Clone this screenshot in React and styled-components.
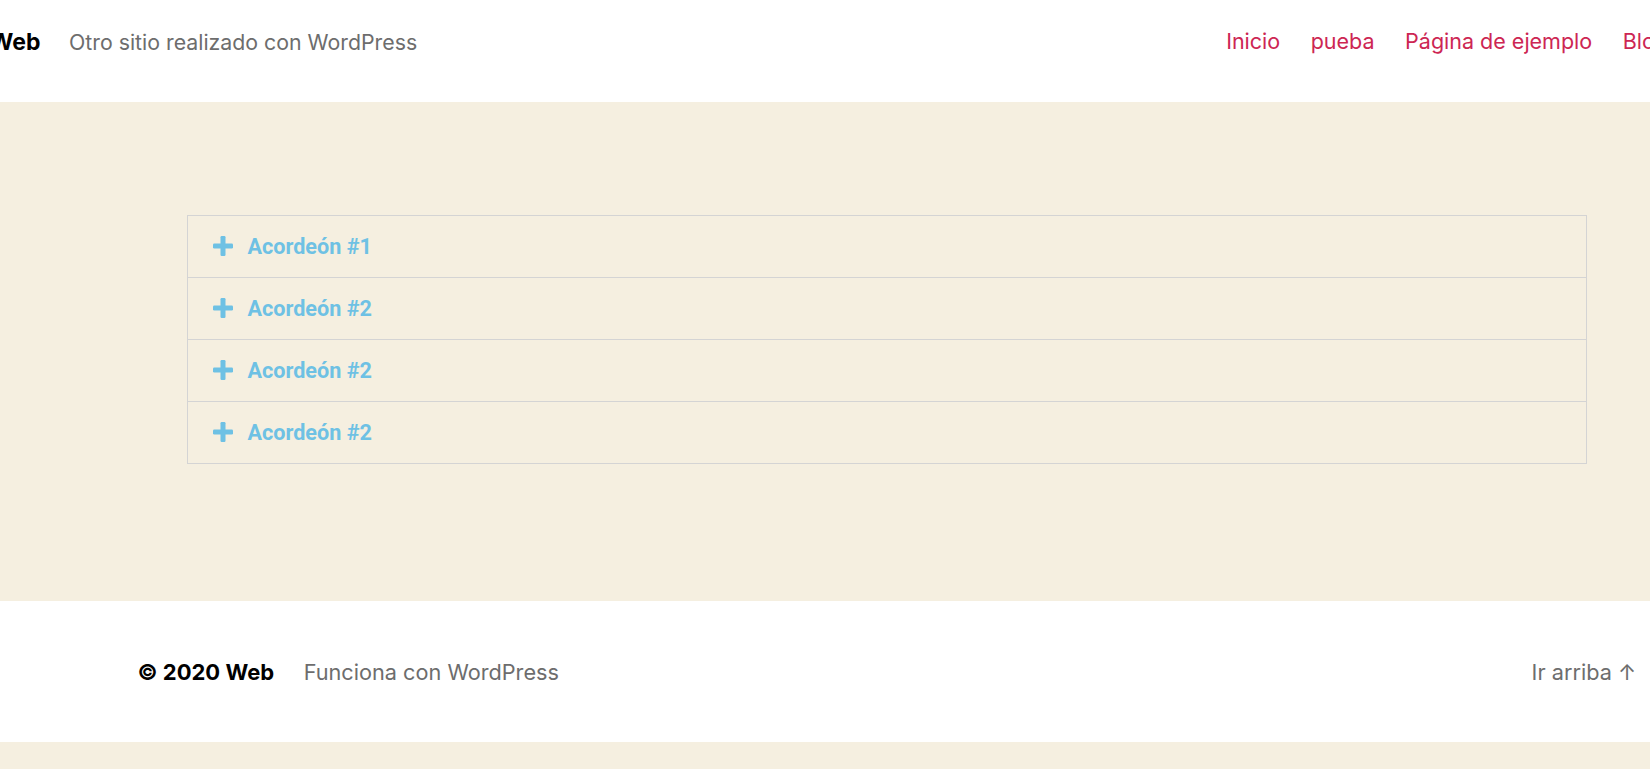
import React from "react";
import styled, { createGlobalStyle } from "styled-components";

const GlobalStyle = createGlobalStyle`
  html, body {
    margin: 0;
    padding: 0;
    background: #f5efe0;
    overflow: hidden;
  }
  body {
    font-family: Inter, "Noto Sans", sans-serif;
    -webkit-font-smoothing: antialiased;
  }
  * { box-sizing: border-box; }
`;

const Page = styled.div`
  width: 1650px;
  min-height: 769px;
  display: flex;
  flex-direction: column;
  background: #f5efe0;
  overflow: hidden;
`;

const Header = styled.header`
  height: 102px;
  background: #ffffff;
  overflow: hidden;
  padding-top: 29px;
`;

const HeaderInner = styled.div`
  display: flex;
  align-items: baseline;
  width: 1760px;
  margin-left: -10.4px;
`;

const SiteTitle = styled.a`
  font-size: 23px;
  line-height: 1.2;
  font-weight: 700;
  color: #000000;
  text-decoration: none;
  white-space: nowrap;
`;

const SiteDescription = styled.div`
  margin-left: 28.5px;
  font-size: 21.3px;
  line-height: 1.2;
  color: #6d6d6d;
  white-space: nowrap;
`;

const Nav = styled.nav`
  margin-left: 809px;
  display: flex;
  align-items: baseline;
  gap: 30.5px;
`;

const NavLink = styled.a`
  font-size: 21.5px;
  line-height: 1.2;
  color: #cd2653;
  text-decoration: none;
  white-space: nowrap;
  position: relative;
  top: -1.5px;
`;

const Main = styled.main`
  background: #f5efe0;
  height: 499px;
  padding-top: 113px;
  padding-left: 187px;
`;

const Accordion = styled.div`
  width: 1400px;
`;

const Item = styled.div`
  border: 1px solid #d4d4d4;
  & + & {
    border-top: none;
  }
`;

const Title = styled.div`
  display: flex;
  align-items: center;
  height: 61px;
  padding-left: 25px;
  gap: 14.5px;
  font-family: Roboto, "Noto Sans", sans-serif;
  font-weight: 700;
  font-size: 21.6px;
  color: #6ec1e4;
  cursor: pointer;
`;

const PlusIcon = styled.svg`
  width: 20px;
  height: 20px;
  flex: none;
  position: relative;
  top: -0.5px;
`;

const Footer = styled.footer`
  height: 141px;
  background: #ffffff;
  display: flex;
  align-items: baseline;
  padding: 58px 14px 0 137.5px;
`;

const Credits = styled.div`
  display: flex;
  align-items: baseline;
  gap: 29.5px;
`;

const Copyright = styled.span`
  font-size: 22px;
  line-height: 1.2;
  font-weight: 700;
  color: #000000;
  white-space: nowrap;
`;

const FooterText = styled.a`
  font-size: 21.7px;
  line-height: 1.2;
  color: #6d6d6d;
  text-decoration: none;
  white-space: nowrap;
`;

const ToTop = styled(FooterText)`
  margin-left: auto;
`;

const Bottom = styled.div`
  flex: 1;
  background: #f5efe0;
`;

const Plus = () => (
  <PlusIcon viewBox="0 0 20 20" aria-hidden="true">
    <rect x="0" y="7.5" width="20" height="5" rx="1.2" fill="#6ec1e4" />
    <rect x="7.5" y="0" width="5" height="20" rx="1.2" fill="#6ec1e4" />
  </PlusIcon>
);

const items = ["Acordeón #1", "Acordeón #2", "Acordeón #2", "Acordeón #2"];

export default function App() {
  return (
    <Page>
      <GlobalStyle />
      <Header>
        <HeaderInner>
          <SiteTitle href="#">Web</SiteTitle>
          <SiteDescription>Otro sitio realizado con WordPress</SiteDescription>
          <Nav>
            <NavLink href="#">Inicio</NavLink>
            <NavLink href="#">pueba</NavLink>
            <NavLink href="#">Página de ejemplo</NavLink>
            <NavLink href="#">Blog</NavLink>
          </Nav>
        </HeaderInner>
      </Header>
      <Main>
        <Accordion>
          {items.map((t, i) => (
            <Item key={i}>
              <Title>
                <Plus />
                <span>{t}</span>
              </Title>
            </Item>
          ))}
        </Accordion>
      </Main>
      <Footer>
        <Credits>
          <Copyright>© 2020 Web</Copyright>
          <FooterText href="#">Funciona con WordPress</FooterText>
        </Credits>
        <ToTop href="#">Ir arriba ↑</ToTop>
      </Footer>
      <Bottom />
    </Page>
  );
}
